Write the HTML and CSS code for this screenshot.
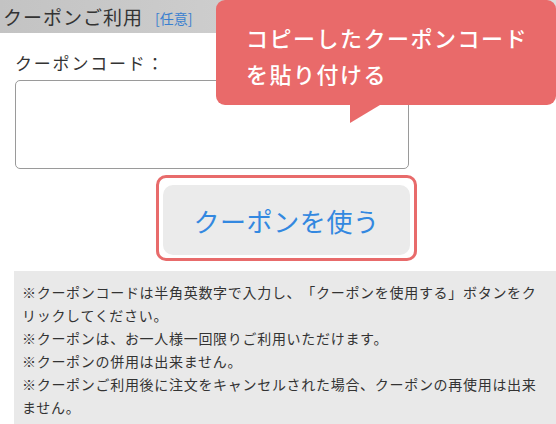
FILE: index.html
```html
<!DOCTYPE html>
<html lang="ja">
<head>
<meta charset="utf-8">
<link rel="stylesheet" href="styles.css">
</head>
<body>
<div class="page">
  <div class="head">
    <span class="head-title">クーポンご利用</span>
    <span class="head-opt">[任意]</span>
  </div>
  <div class="form">
    <div class="label">クーポンコード：</div>
    <textarea class="code"></textarea>
    <div class="btn-wrap">
      <div class="btn-ring">
        <button class="btn">クーポンを使う</button>
      </div>
    </div>
    <div class="notes">
      <p>※クーポンコードは半角英数字で入力し、「クーポンを使用する」ボタンをクリックしてください。</p>
      <p>※クーポンは、お一人様一回限りご利用いただけます。</p>
      <p>※クーポンの併用は出来ません。</p>
      <p>※クーポンご利用後に注文をキャンセルされた場合、クーポンの再使用は出来ません。</p>
    </div>
  </div>
  <div class="tip">
    コピーしたクーポンコード<br>を貼り付ける
    <span class="tip-tail"></span>
  </div>
</div>
</body>
</html>
```

FILE: styles.css
```css
* { box-sizing: border-box; }
html, body {
  margin: 0;
  padding: 0;
  background: #fff;
  overflow: hidden;
}
body {
  font-family: "Noto Sans CJK JP", "Noto Sans", sans-serif;
  color: #333;
  text-spacing-trim: space-all;
}
.page {
  position: relative;
  width: 556px;
  height: 424px;
  overflow: hidden;
}
.head {
  height: 33px;
  background: linear-gradient(to right, #c3c3c3, #dcdcdc);
  display: flex;
  align-items: center;
  padding-left: 3px;
}
.head-title {
  font-size: 19px;
  letter-spacing: 1px;
  color: #333;
  line-height: 1;
}
.head-opt {
  font-size: 14px;
  color: #3a7fcf;
  margin-left: 12px;
  line-height: 1;
  margin-top: 2px;
}
.form {
  padding-left: 15px;
}
.label {
  font-size: 17px;
  letter-spacing: 1.8px;
  line-height: 24px;
  margin-top: 18px;
  color: #333;
}
.code {
  display: block;
  width: 394px;
  height: 89px;
  margin: 5px 0 0 0;
  border: 1px solid #9a9a9a;
  border-radius: 5px;
  background: #fff;
  resize: none;
  outline: none;
}
.btn-wrap {
  display: flex;
  padding-left: 141px;
  margin-top: 6px;
}
.btn-ring {
  border: 3px solid #e86b6b;
  border-radius: 10px;
  padding: 7px 4px 3px 4px;
  background: #fff;
}
.btn {
  display: block;
  width: 247px;
  height: 70px;
  border: none;
  border-radius: 10px;
  background: #ebebeb;
  color: #3388e0;
  font-family: "Noto Sans CJK JP", "Noto Sans", sans-serif;
  font-size: 26px;
  letter-spacing: 0.6px;
  padding: 0;
}
.notes {
  margin-top: 10px;
  margin-left: -1px;
  background: #e9e9e9;
  padding: 10px 16px 10px 8px;
  font-size: 14px;
  letter-spacing: 0.7px;
  line-height: 23px;
  color: #333;
}
.notes p {
  margin: 0;
}
.tip {
  position: absolute;
  left: 216px;
  top: 0;
  width: 340px;
  height: 105px;
  background: #e96a6a;
  border-radius: 9px;
  color: #fff;
  font-size: 22px;
  font-weight: 500;
  letter-spacing: 1.5px;
  line-height: 36px;
  padding: 19px 0 0 30px;
}
.tip-tail {
  position: absolute;
  left: 134px;
  top: 105px;
  width: 0;
  height: 0;
  border-top: 18px solid #e96a6a;
  border-right: 30px solid transparent;
  border-left: 0 solid transparent;
}
```
